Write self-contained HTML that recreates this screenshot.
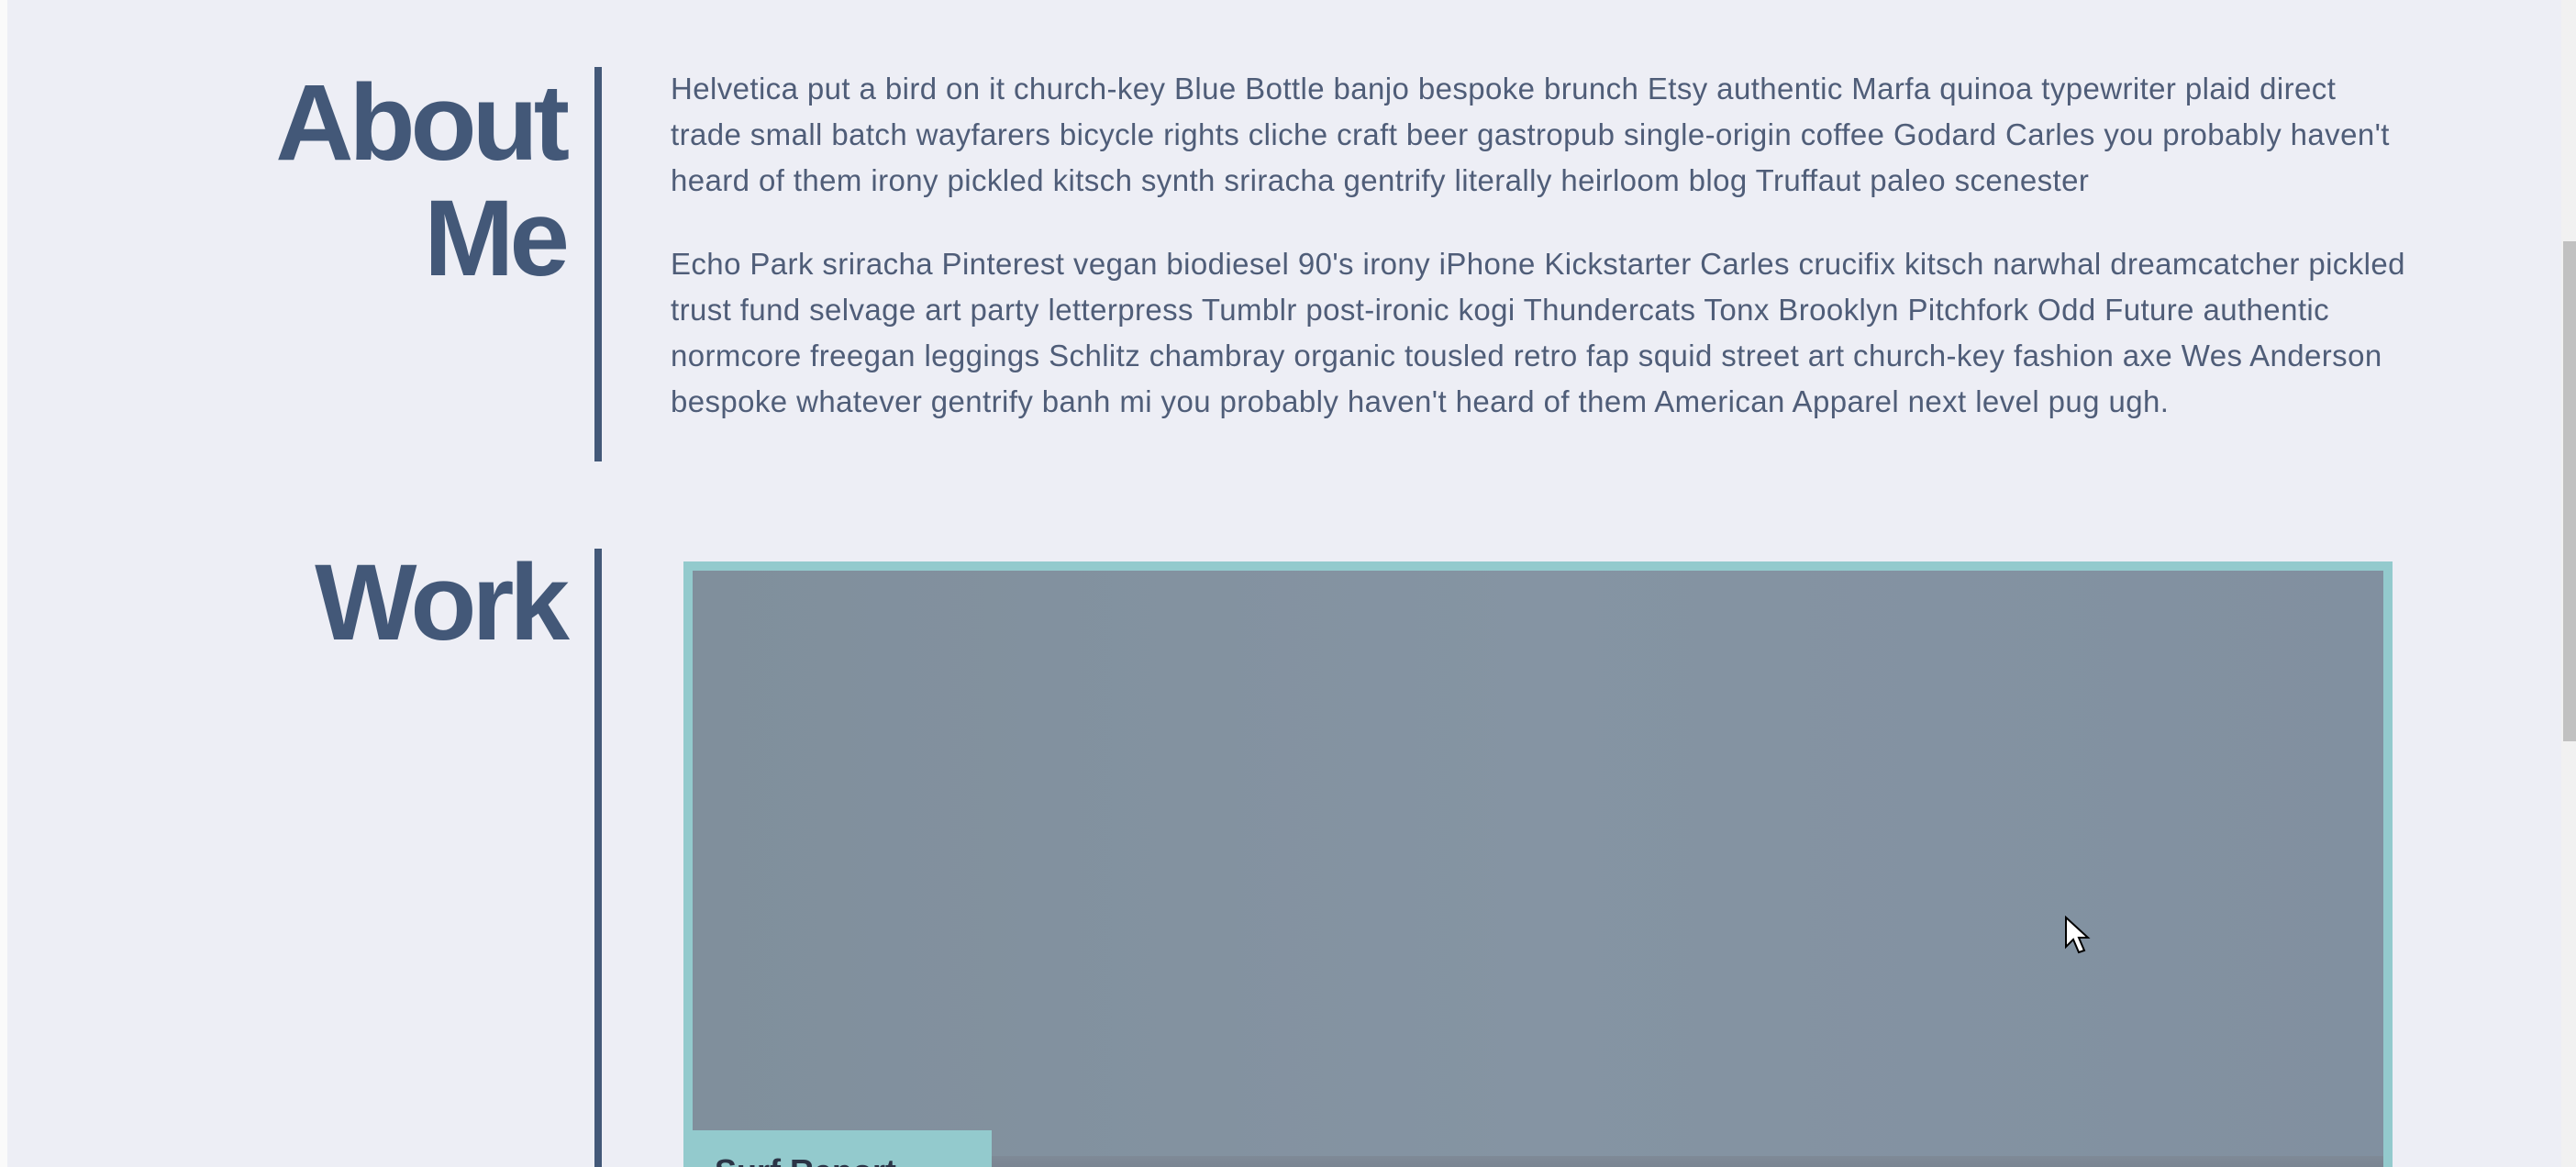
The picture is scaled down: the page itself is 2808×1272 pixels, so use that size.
<!DOCTYPE html>
<html><head><meta charset="utf-8"><style>
html,body{margin:0;padding:0;overflow:hidden;width:2808px;height:1272px}
body{background:#edeef5;position:relative;font-family:"Liberation Sans",sans-serif}
.wrap{position:absolute;left:0;top:0;width:2808px;height:1272px;overflow:hidden}
.lm{position:absolute;left:0;top:0;width:8px;height:1272px;background:#fafafa}
.bar{position:absolute;left:648px;width:8px;background:#435878}
.h{position:absolute;right:2192px;color:#435878;font-weight:bold;font-size:118px;letter-spacing:-5px;line-height:126px;text-align:right;white-space:nowrap}
.p{position:absolute;left:731px;color:#4f5d78;font-size:33px;letter-spacing:0.4px;line-height:50px;white-space:nowrap}
.sb{position:absolute;left:2792px;top:0;width:16px;height:1272px;background:#f1f1f1}
.th{position:absolute;left:2794px;top:263px;width:14px;height:545px;background:#c1c1c1}
.img{position:absolute;left:745px;top:612px;width:1863px;height:660px;background:#93cacd}
.in{position:absolute;left:755px;top:622px;width:1843px;height:650px;background:linear-gradient(90deg,#808f9c,#8594a3 50%,#8190a0)}
.band{position:absolute;left:755px;top:1260px;width:1843px;height:12px;background:linear-gradient(#7f8a97,#7a8592)}
.cap{position:absolute;left:745px;top:1232px;width:336px;height:40px;overflow:hidden;background:#93cacd;color:#2b3446;font-weight:bold;font-size:36px;padding:24px 0 0 34px;box-sizing:border-box;white-space:nowrap}
</style></head><body><div class="wrap">
<div class="lm"></div>
<div class="bar" style="top:73px;height:430px"></div>
<div class="bar" style="top:598px;height:674px"></div>
<div class="h" style="top:71px">About<br>Me</div>
<div class="h" style="top:594px">Work</div>
<div class="p" style="top:72px">Helvetica put a bird on it church-key Blue Bottle banjo bespoke brunch Etsy authentic Marfa quinoa typewriter plaid direct<br>trade small batch wayfarers bicycle rights cliche craft beer gastropub single-origin coffee Godard Carles you probably haven't<br>heard of them irony pickled kitsch synth sriracha gentrify literally heirloom blog Truffaut paleo scenester</div>
<div class="p" style="top:263px">Echo Park sriracha Pinterest vegan biodiesel 90's irony iPhone Kickstarter Carles crucifix kitsch narwhal dreamcatcher pickled<br>trust fund selvage art party letterpress Tumblr post-ironic kogi Thundercats Tonx Brooklyn Pitchfork Odd Future authentic<br>normcore freegan leggings Schlitz chambray organic tousled retro fap squid street art church-key fashion axe Wes Anderson<br>bespoke whatever gentrify banh mi you probably haven't heard of them American Apparel next level pug ugh.</div>
<div class="img"></div>
<div class="in"></div>
<div class="band"></div>
<div class="cap">Surf Report</div>
<svg style="position:absolute;left:2250px;top:998px" width="30" height="44" viewBox="0 0 15 22"><path d="M1 1 L1 17 L5 13 L8 20 L11 19 L8 12 L13 12 Z" fill="#fff" stroke="#000" stroke-width="1"/></svg>
<div class="sb"></div><div class="th"></div>
</div></body></html>
